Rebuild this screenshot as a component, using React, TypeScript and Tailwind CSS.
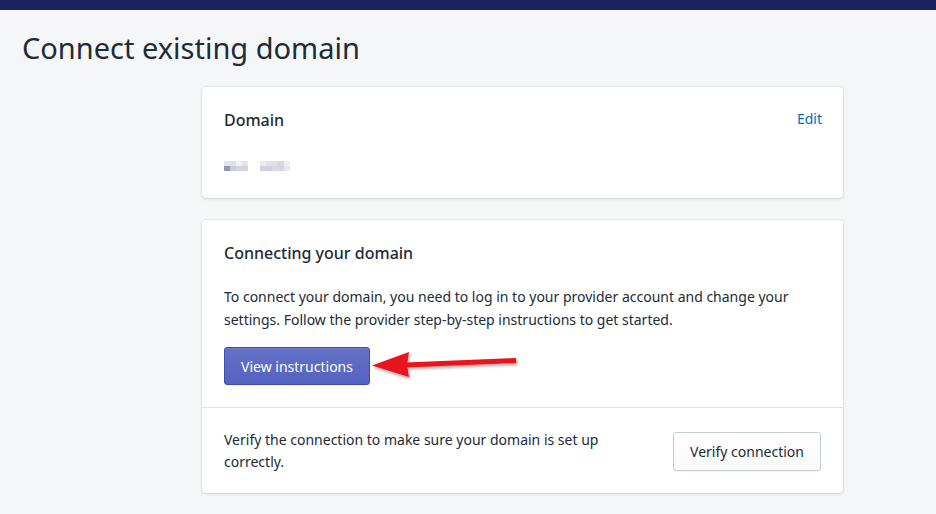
import React from 'react';

function Arrow() {
  return (
    <svg width="160" height="50" viewBox="0 0 160 50" className="absolute left-[146px] top-[-6px]" aria-hidden>
      <defs>
        <filter id="sh" x="-20%" y="-50%" width="140%" height="200%">
          <feDropShadow dx="1" dy="2" stdDeviation="1.5" floodColor="#000" floodOpacity="0.35" />
        </filter>
      </defs>
      <g filter="url(#sh)">
        <path d="M36 21.5 L146 17 L146.4 22 L36 26.5 Z" fill="#e8141b" />
        <path d="M2 24.5 L39 11 L37 24 L39 36 Z" fill="#e8141b" />
      </g>
    </svg>
  );
}

const mosaic = [
  ['#e4e6ec', '#dfe1e8', '#f2f2f5', '#e6e4ea', '#fff', '#fff', '#eceaef', '#e3e1e7', '#e1dfe6', '#ddd6dc', '#eceef2'],
  ['#8f9aab', '#c9ccd6', '#d3d5dd', '#d6d4dc', '#fff', '#fff', '#d3d3dc', '#d0d0d8', '#d9d8df', '#d9d5da', '#e6e9ef'],
];

export default function App() {
  return (
    <div className="min-h-screen bg-[#f4f6f8] text-[#212b36]" style={{ fontFamily: '"Noto Sans", "Open Sans", sans-serif' }}>
      <div className="h-[10px] bg-[#1c2260]" />
      <div className="px-[22px] pt-[19px]">
        <h1 className="text-[29px] leading-[38px] font-normal">Connect existing domain</h1>
      </div>

      <main className="ml-[202px] w-[641px] mt-[20px] space-y-[22px]">
        <section className="bg-white rounded-[4px] shadow-[0_0_0_1px_rgba(63,63,68,0.05),0_1px_3px_0_rgba(63,63,68,0.15)] px-[22px] pt-[21px] pb-[20px]">
          <div className="flex items-start justify-between">
            <h2 className="text-[16px] leading-[24px] font-medium">Domain</h2>
            <a className="text-[14px] leading-[20px] text-[#006fbb] -mr-[1px] mt-[1px]">Edit</a>
          </div>
          <div className="mt-[22px] h-[24px] flex items-center">
            <div className="flex flex-col blur-[0.6px]">
              {mosaic.map((row, i) => (
                <div key={i} className="flex">
                  {row.map((c, j) => (
                    <span key={j} className="w-[6px] h-[5px]" style={{ backgroundColor: c }} />
                  ))}
                </div>
              ))}
            </div>
          </div>
        </section>

        <section className="bg-white rounded-[4px] shadow-[0_0_0_1px_rgba(63,63,68,0.05),0_1px_3px_0_rgba(63,63,68,0.15)]">
          <div className="px-[22px] pt-[21px] pb-[22px]">
            <h2 className="text-[16px] leading-[24px] font-medium">Connecting your domain</h2>
            <p className="mt-[20px] text-[14px] leading-[23px] pr-[30px]">
              To connect your domain, you need to log in to your provider account and change your settings. Follow the provider step-by-step instructions to get started.
            </p>
            <div className="relative mt-[16px] h-[38px]">
              <button className="h-[38px] w-[146px] rounded-[3px] border border-[#3f4eae] bg-[linear-gradient(180deg,#6371c7,#5563c1)] text-white text-[14px] shadow-[inset_0_1px_0_0_#6f7bcb,0_1px_0_0_rgba(22,29,37,0.05)]">
                View instructions
              </button>
              <Arrow />
            </div>
          </div>
          <div className="border-t border-[#dfe3e8] px-[22px] pt-[21px] pb-[20px] flex items-center justify-between">
            <p className="text-[14px] leading-[22px] w-[400px]">
              Verify the connection to make sure your domain is set up correctly.
            </p>
            <button className="h-[39px] w-[148px] rounded-[3px] border border-[#c4cdd5] bg-[linear-gradient(180deg,#fff,#f9fafb)] text-[14px] text-[#212b36] shadow-[0_1px_0_0_rgba(22,29,37,0.05)]">
              Verify connection
            </button>
          </div>
        </section>
      </main>
    </div>
  );
}
